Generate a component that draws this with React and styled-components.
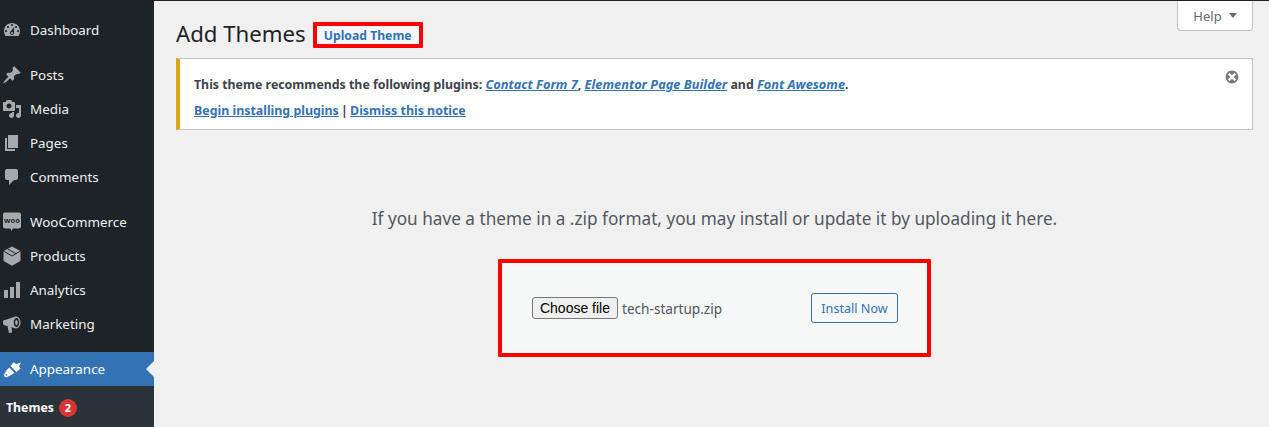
import React from "react"
import styled, { createGlobalStyle } from "styled-components"

const GlobalStyle = createGlobalStyle`
  html, body { margin: 0; padding: 0; height: 100%; overflow: hidden; }
  body { background: #f0f0f1; font-family: "Noto Sans", "Open Sans", sans-serif; color: #3c434a; }
`

const Page = styled.div`
  display: flex;
  flex-direction: column;
  height: 427px;
  overflow: hidden;
`
const TopStrip = styled.div`
  height: 1px;
  background: #1d2327;
  flex: none;
`
const Body = styled.div`
  display: flex;
  flex: 1;
  min-height: 0;
`
const Sidebar = styled.nav`
  width: 154px;
  flex: none;
  background: #1d2327;
  padding-top: 12px;
  display: flex;
  flex-direction: column;
`
const MenuItem = styled.div`
  position: relative;
  height: 34px;
  flex: none;
  display: flex;
  align-items: center;
  gap: 8px;
  padding-left: 2px;
  margin-bottom: ${({ $sep }) => ($sep ? "11px" : "0")};
  background: ${({ $active }) => ($active ? "#3373b3" : "transparent")};
  color: ${({ $active }) => ($active ? "#fff" : "#f0f0f1")};
  font-size: 13.4px;
  svg { flex: none; fill: ${({ $active }) => ($active ? "#fff" : "#a7aaad")}; }
`
const MenuLabel = styled.span`
  line-height: 20px;
`
const ActiveArrow = styled.span`
  position: absolute;
  right: 0;
  top: 9px;
  border: 8px solid transparent;
  border-right-color: #f0f0f1;
  border-left-width: 0;
`
const SubMenu = styled.div`
  flex: 1;
  background: #2c3338;
  padding: 13px 0 0 6px;
  display: flex;
  align-items: flex-start;
  gap: 5px;
  color: #fff;
  font-size: 12.3px;
  font-weight: 700;
`
const Badge = styled.span`
  width: 18px;
  height: 18px;
  border-radius: 50%;
  background: #d63638;
  font-size: 11px;
  line-height: 18px;
  text-align: center;
`
const Main = styled.main`
  flex: 1;
  min-width: 0;
  padding: 0 16px 0 22px;
`
const HelpButton = styled.div`
  float: right;
  width: 76px;
  height: 30px;
  box-sizing: border-box;
  background: #fff;
  border: 1px solid #c3c4c7;
  border-top: none;
  border-radius: 0 0 4px 4px;
  display: flex;
  align-items: center;
  justify-content: center;
  gap: 7px;
  color: #646970;
  font-size: 13px;
`
const HelpArrow = styled.span`
  border: 4px solid transparent;
  border-top: 5px solid #646970;
  border-bottom-width: 0;
`
const Heading = styled.div`
  display: flex;
  align-items: center;
  gap: 7px;
  height: 27px;
  padding-top: 20px;
`
const Title = styled.h1`
  margin: 0;
  padding-bottom: 2px;
  font-size: 22.2px;
  font-weight: 400;
  color: #1d2327;
`
const UploadLink = styled.a`
  height: 26px;
  width: 110px;
  box-sizing: border-box;
  border: 4px solid #f00;
  border-radius: 1px;
  padding-top: 1px;
  background: #f6f7f7;
  display: flex;
  align-items: center;
  justify-content: center;
  color: #3373b3;
  font-size: 12.2px;
  font-weight: 700;
`
const Notice = styled.div`
  position: relative;
  margin-top: 10px;
  height: 72px;
  box-sizing: border-box;
  background: #fff;
  border: 1px solid #c3c4c7;
  border-left: 4px solid #dba617;
  padding: 17px 14px 0;
  font-size: 12.35px;
  font-weight: 700;
  color: #3c434a;
`
const NoticeLine = styled.p`
  margin: 0 0 9px;
  line-height: 17px;
`
const PluginLink = styled.a`
  color: #3373b3;
  text-decoration: underline;
  font-size: ${({ $italic }) => ($italic ? "12.8px" : "12.4px")};
  font-style: ${({ $italic }) => ($italic ? "italic" : "normal")};
`
const Separator = styled.span`
  margin: 0 -1px;
`
const DismissIcon = styled.svg`
  position: absolute;
  top: 10px;
  right: 12px;
  fill: #787c82;
`
const UploadArea = styled.section`
  display: flex;
  flex-direction: column;
  align-items: center;
`
const Hint = styled.p`
  margin: 77px 0 28px;
  font-size: 17.2px;
  line-height: 24px;
  color: #50575e;
`
const UploadForm = styled.form`
  width: 433px;
  height: 98px;
  box-sizing: border-box;
  background: #f6f7f7;
  border: 4px solid #f00;
  border-radius: 1px;
  padding: 0 29px 0 30px;
  display: flex;
  align-items: center;
`
const ChooseButton = styled.button`
  width: 86px;
  height: 22px;
  box-sizing: border-box;
  padding: 0;
  background: #efefef;
  border: 1px solid #767676;
  border-radius: 3px;
  color: #000;
  font: 14px "Liberation Sans", Arial, sans-serif;
`
const FileName = styled.span`
  margin-left: 4px;
  flex: 1;
  font-size: 13.6px;
  color: #50575e;
`
const InstallButton = styled.button`
  width: 87px;
  height: 30px;
  box-sizing: border-box;
  padding: 0;
  background: #f6f7f7;
  border: 1px solid #3373b3;
  border-radius: 3px;
  color: #3373b3;
  font: 12.6px "Noto Sans", sans-serif;
`

const Icon = ({ children }) => (
  <svg width="20" height="20" viewBox="0 0 20 20">{children}</svg>
)

const items = [
  { label: "Dashboard", sep: true, d: "M3.76 16h12.48c1.1-1.37 1.76-3.11 1.76-5 0-4.42-3.58-8-8-8s-8 3.58-8 8c0 1.89.66 3.63 1.76 5zM10 4c.55 0 1 .45 1 1s-.45 1-1 1-1-.45-1-1 .45-1 1-1zM6 6c.55 0 1 .45 1 1s-.45 1-1 1-1-.45-1-1 .45-1 1-1zm8 0c.55 0 1 .45 1 1s-.45 1-1 1-1-.45-1-1 .45-1 1-1zm-5.37 5.55L12 7v6c0 1.1-.9 2-2 2s-2-.9-2-2c0-.57.24-1.08.63-1.45zM4 10c.55 0 1 .45 1 1s-.45 1-1 1-1-.45-1-1 .45-1 1-1zm12 0c.55 0 1 .45 1 1s-.45 1-1 1-1-.45-1-1 .45-1 1-1zm-5 3c0-.55-.45-1-1-1s-1 .45-1 1 .45 1 1 1 1-.45 1-1z" },
  { label: "Posts", d: "M10.44 3.02l1.82-1.82 6.36 6.35-1.83 1.82c-1.05-.68-2.48-.57-3.41.36l-.75.75c-.92.93-1.04 2.35-.35 3.41l-1.83 1.82-2.41-2.41-2.8 2.79c-.42.42-3.38 2.71-3.8 2.29s1.86-3.39 2.28-3.81l2.79-2.79L4.1 9.36l1.83-1.82c1.05.69 2.48.57 3.4-.36l.75-.75c.93-.92 1.05-2.35.36-3.41z" },
  { label: "Media", d: "M13 11V4c0-.55-.45-1-1-1h-1.67L9 1H5L3.67 3H2c-.55 0-1 .45-1 1v7c0 .55.45 1 1 1h10c.55 0 1-.45 1-1zM7 4.5c1.38 0 2.5 1.12 2.5 2.5S8.38 9.5 7 9.5 4.5 8.38 4.5 7 5.62 4.5 7 4.5zM14 6h5v10.5c0 1.38-1.12 2.5-2.5 2.5S14 17.88 14 16.5s1.12-2.5 2.5-2.5c.17 0 .34.02.5.05V9h-3V6zm-4 8.05V13h2v3.5c0 1.38-1.12 2.5-2.5 2.5S7 17.88 7 16.5 8.12 14 9.5 14c.17 0 .34.02.5.05z" },
  { label: "Pages", d: "M6 15V2h10v13H6zm-1 1h8v2H3V5h2v11z" },
  { label: "Comments", sep: true, d: "M5 2h9c1.1 0 2 .9 2 2v7c0 1.1-.9 2-2 2h-2l-5 5v-5H5c-1.1 0-2-.9-2-2V4c0-1.1.9-2 2-2z" },
  { label: "WooCommerce", woo: true },
  { label: "Products", box: true },
  { label: "Analytics", d: "M18 18V2h-4v16h4zm-6 0V7H8v11h4zm-6 0v-8H2v8h4z" },
  { label: "Marketing", sep: true, d: "M1 7.5C1 6.500 2 6 3 6l9-3c3-1.500 6.500 1 6.500 5.500S15 15.500 12 14l-2.500-1 .5 5.500-3 .5-1.500-7-2.500-.5C2 11 1 10.500 1 9.500zM14.500 4c-1.500 0-2.800 2-2.800 4.500s1.300 4.500 2.800 4.500 2.800-2 2.800-4.500S16 4 14.500 4zM14.500 6c.8 0 1.300 1.100 1.300 2.500S15.300 11 14.500 11s-1.300-1.100-1.300-2.500S13.700 6 14.500 6z" },
]

const App = () => (
  <Page>
    <GlobalStyle />
    <TopStrip />
    <Body>
      <Sidebar>
        {items.map((item) => (
          <MenuItem key={item.label} $sep={item.sep}>
            <Icon>
              {item.woo && (
                <>
                  <path d="M3 .5h14c1.100 0 2 .9 2 2v12c0 1.100-.9 2-2 2h-6l-1.500 2.500L8.500 16.500H3c-1.100 0-2-.9-2-2v-12c0-1.100.9-2 2-2z" />
                  <text x="10" y="11" textAnchor="middle" fontSize="7.500" fontWeight="700" fontFamily="Noto Sans" fill="#1d2327">woo</text>
                </>
              )}
              {item.box && (
                <>
                  <path d="M10 .5l8.500 4.500v10L10 19.800 1.500 15V5z" />
                  <path d="M1.500 5l8.500 5 8.500-5M5.500 2.800l8.500 5" fill="none" stroke="#1d2327" strokeWidth="1" />
                </>
              )}
              {item.d && <path fillRule="evenodd" d={item.d} />}
            </Icon>
            <MenuLabel>{item.label}</MenuLabel>
          </MenuItem>
        ))}
        <MenuItem $active>
          <Icon>
            <path d="M8.500 7L11.500 3.300 14 5l5-1.500-2 4 1.500 2L14.500 13z" />
            <path d="M7.300 8.500L12.500 13.700 10 15.500 5 18c-1.500.9-3.500-.7-3-2.200l2.500-4.500zM3.700 15.300a.9.9 0 1 0 1.300 1.300.9.9 0 1 0-1.300-1.300z" fillRule="evenodd" />
          </Icon>
          <MenuLabel>Appearance</MenuLabel>
          <ActiveArrow />
        </MenuItem>
        <SubMenu>
          Themes
          <Badge>2</Badge>
        </SubMenu>
      </Sidebar>
      <Main>
        <HelpButton>
          Help
          <HelpArrow />
        </HelpButton>
        <Heading>
          <Title>Add Themes</Title>
          <UploadLink>Upload Theme</UploadLink>
        </Heading>
        <Notice>
          <NoticeLine>
            This theme recommends the following plugins:{" "}
            <PluginLink $italic>Contact Form 7</PluginLink>,{" "}
            <PluginLink $italic>Elementor Page Builder</PluginLink> and{" "}
            <PluginLink $italic>Font Awesome</PluginLink>.
          </NoticeLine>
          <NoticeLine>
            <PluginLink>Begin installing plugins</PluginLink> <Separator>|</Separator>{" "}
            <PluginLink>Dismiss this notice</PluginLink>
          </NoticeLine>
          <DismissIcon width="16" height="16" viewBox="0 0 20 20">
            <path d="M10 2c4.420 0 8 3.580 8 8s-3.580 8-8 8-8-3.580-8-8 3.580-8 8-8zm5 11l-3-3 3-3-2-2-3 3-3-3-2 2 3 3-3 3 2 2 3-3 3 3z" />
          </DismissIcon>
        </Notice>
        <UploadArea>
          <Hint>If you have a theme in a .zip format, you may install or update it by uploading it here.</Hint>
          <UploadForm>
            <ChooseButton type="button">Choose file</ChooseButton>
            <FileName>tech-startup.zip</FileName>
            <InstallButton type="button">Install Now</InstallButton>
          </UploadForm>
        </UploadArea>
      </Main>
    </Body>
  </Page>
)

export default App
